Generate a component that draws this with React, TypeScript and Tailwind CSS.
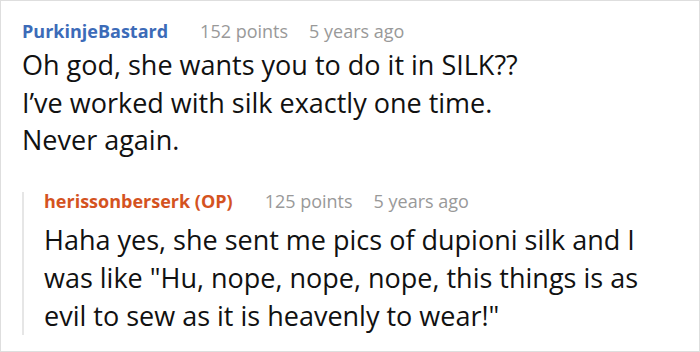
const comment = {
  user: "PurkinjeBastard",
  points: "152 points",
  age: "5 years ago",
  lines: ["Oh god, she wants you to do it in SILK??", "I’ve worked with silk exactly one time.", "Never again."],
};

const reply = {
  user: "herissonberserk (OP)",
  points: "125 points",
  age: "5 years ago",
  text: 'Haha yes, she sent me pics of dupioni silk and I was like "Hu, nope, nope, nope, this things is as evil to sew as it is heavenly to wear!"',
};

function Meta({ user, points, age, color }: { user: string; points: string; age: string; color: string }) {
  return (
    <div className="flex items-center text-[18px] leading-none">
      <span className={`font-bold ${color}`}>{user}</span>
      <span className="ml-[32px] text-[#999999]">{points}</span>
      <span className="ml-[21px] text-[#999999]">{age}</span>
    </div>
  );
}

export default function App() {
  return (
    <div
      className="w-[700px] h-[352px] overflow-hidden bg-white border border-[#dedede] pl-[21px] pt-[21px] text-[#111111]"
      style={{ fontFamily: '"Open Sans", "Noto Sans", sans-serif' }}
    >
      <Meta user={comment.user} points={comment.points} age={comment.age} color="text-[#3c6bb8]" />
      <div className="mt-[6px] text-[27px] leading-[37.5px]">
        {comment.lines.map((l) => (
          <p key={l}>{l}</p>
        ))}
      </div>
      <div className="mt-[39px] border-l-2 border-[#e6e6e6] pl-[20px]">
        <div className="-mt-[6px]">
          <Meta user={reply.user} points={reply.points} age={reply.age} color="text-[#d4531f]" />
        </div>
        <p className="mt-[11px] text-[27px] leading-[38px] w-[640px]">{reply.text}</p>
      </div>
    </div>
  );
}
